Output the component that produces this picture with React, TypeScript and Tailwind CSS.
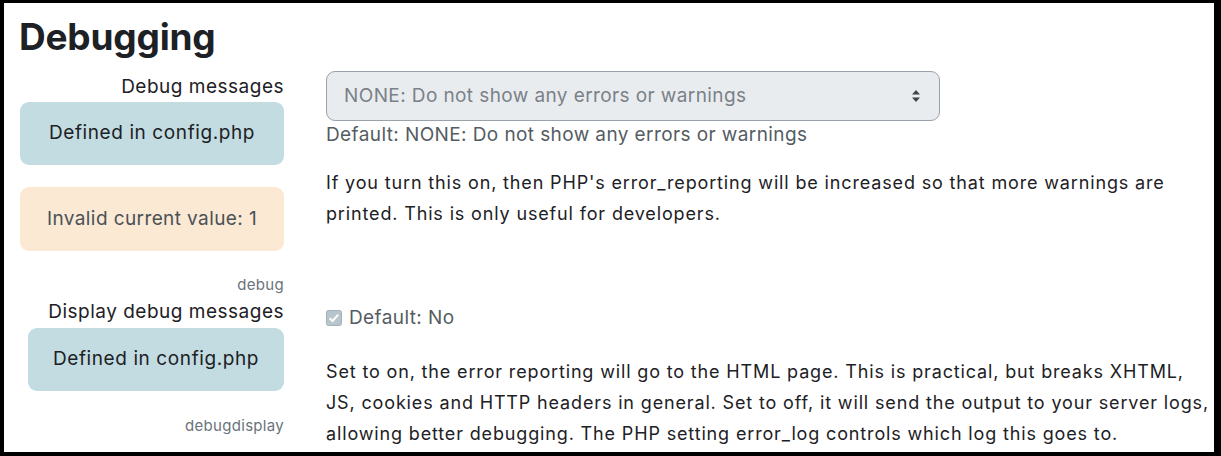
import React from 'react';

const font = { fontFamily: 'Inter, "Liberation Sans", sans-serif' };

const SelectArrows: React.FC = () => (
  <svg width="10" height="14" viewBox="0 0 10 14" className="text-[#3f454b]">
    <path d="M5 1 L9 5.5 H1 Z" fill="currentColor" />
    <path d="M5 13 L9 8.5 H1 Z" fill="currentColor" />
  </svg>
);

const CheckIcon: React.FC = () => (
  <svg width="16" height="16" viewBox="0 0 16 16">
    <rect x="0.5" y="0.5" width="15" height="15" rx="2" fill="#b7c5cc" stroke="#a3b1b8" />
    <path d="M3.6 8.2 L6.6 11 L12.2 4.6" fill="none" stroke="#ffffff" strokeWidth="2" />
  </svg>
);

const App: React.FC = () => {
  return (
    <div
      className="w-[1221px] h-[456px] bg-white border-black border-l-4 border-t-[3px] border-r-[7px] border-b-4 overflow-hidden text-[#1d2125]"
      style={font}
    >
      <h2 className="mt-[14px] pl-[15px] text-[37px] leading-[40px] font-bold tracking-[-0.2px]">Debugging</h2>

      <div className="flex pl-[16px]">
        {/* debug */}
        <div className="w-[264px] flex flex-col">
          <div className="mt-[16px] text-right text-[19px] leading-[28px] tracking-[0.5px]">Debug messages</div>
          <div className="mt-[1px] h-[63px] rounded-[9px] bg-[#c2dce1] flex items-center justify-center text-[19px] tracking-[0.6px]">
            Defined in config.php
          </div>
          <div className="mt-[22px] h-[64px] rounded-[9px] bg-[#fbe9d4] flex items-center justify-center text-[19px] tracking-[0.4px] text-[#4a5157]">
            Invalid current value: 1
          </div>
          <div className="mt-[24px] text-right text-[15px] leading-[20px] tracking-[0.3px] text-[#6a737b]">debug</div>
        </div>
        <div className="ml-[42px] flex-1 flex flex-col">
          <div className="mt-[14px] w-[614px] h-[50px] rounded-[9px] border border-[#9aa1a8] bg-[#e9ecef] flex items-center justify-between pl-[17px] pr-[18px] text-[19px] tracking-[0.4px] text-[#7a8188]">
            <span>NONE: Do not show any errors or warnings</span>
            <SelectArrows />
          </div>
          <div className="text-[19px] leading-[27px] tracking-[0.4px] text-[#555c62]">Default: NONE: Do not show any errors or warnings</div>
          <p className="mt-[19px] text-[18px] leading-[31px] tracking-[0.85px]">
            If you turn this on, then PHP's error_reporting will be increased so that more warnings are printed. This is only useful for developers.
          </p>
        </div>
      </div>

      <div className="flex pl-[16px]">
        {/* debugdisplay */}
        <div className="w-[264px] flex flex-col">
          <div className="mt-[3px] text-right text-[19px] leading-[28px] tracking-[0.5px]">Display debug messages</div>
          <div className="mt-[2px] ml-[8px] h-[63px] rounded-[9px] bg-[#c2dce1] flex items-center justify-center text-[19px] tracking-[0.6px]">
            Defined in config.php
          </div>
          <div className="mt-[25px] text-right text-[15px] leading-[20px] tracking-[0.3px] text-[#6a737b]">debugdisplay</div>
        </div>
        <div className="ml-[42px] flex-1 flex flex-col">
          <div className="mt-[9px] flex items-center gap-[7px] text-[19px] leading-[27px] tracking-[0.4px] text-[#555c62]">
            <CheckIcon />
            <span>Default: No</span>
          </div>
          <p className="mt-[25px] text-[18px] leading-[31px] tracking-[0.85px]">
            Set to on, the error reporting will go to the HTML page. This is practical, but breaks XHTML, JS, cookies and HTTP headers in general. Set to off, it will send the output to your server logs, allowing better debugging. The PHP setting error_log controls which log this goes to.
          </p>
        </div>
      </div>
    </div>
  );
};

export default App;
